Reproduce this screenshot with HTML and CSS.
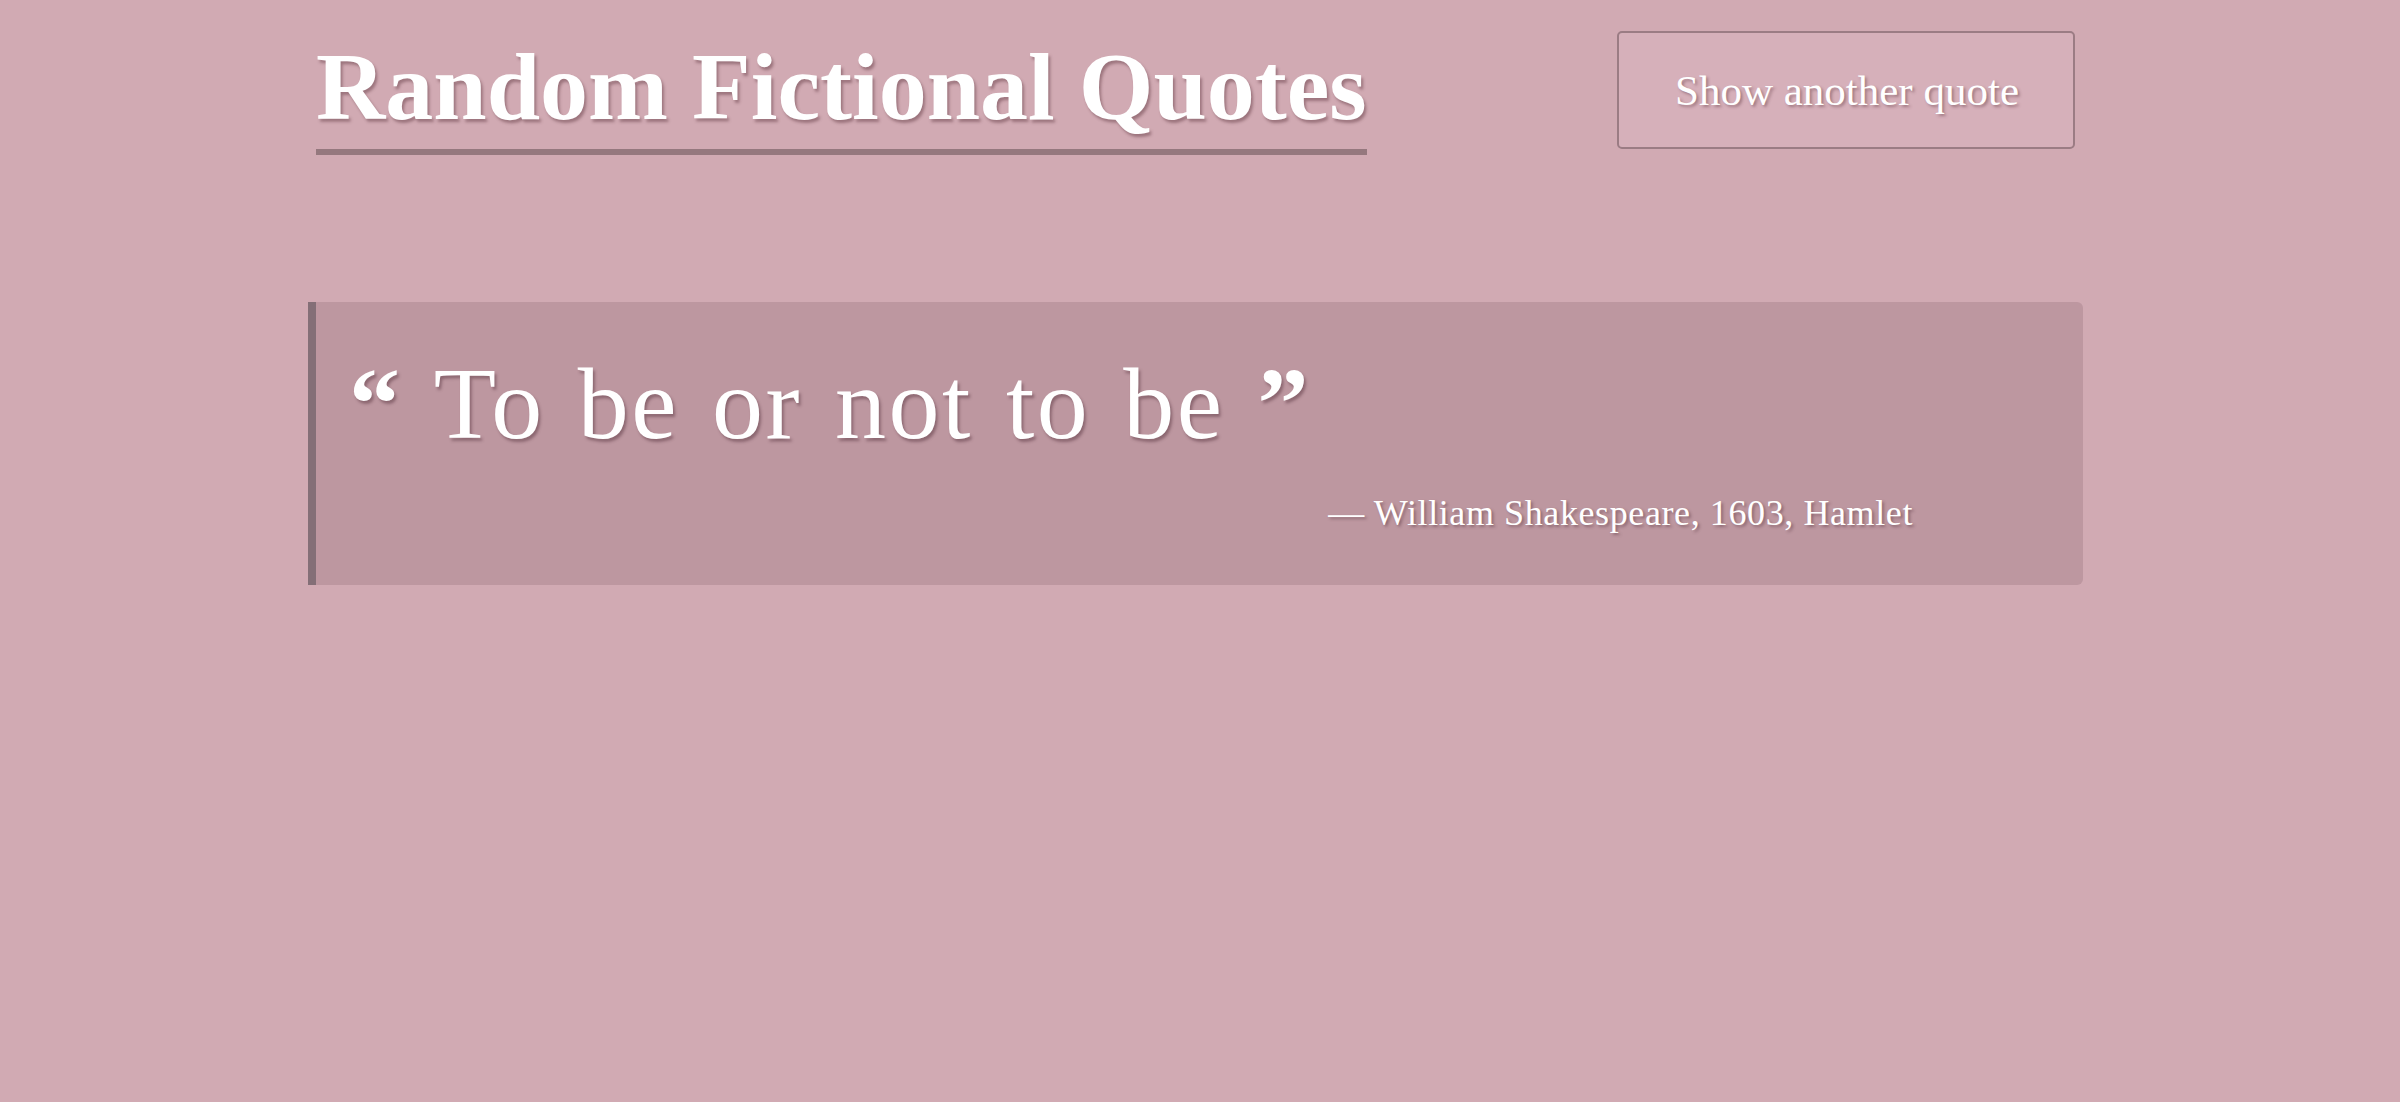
FILE: index.html
```html
<!DOCTYPE html>
<html lang="en">
<head>
<meta charset="utf-8">
<title>Random Fictional Quotes</title>
<link rel="stylesheet" href="styles.css">
</head>
<body>
<div class="page">
  <header class="header">
    <h1 class="title">Random Fictional Quotes</h1>
    <button class="btn" type="button">Show another quote</button>
  </header>
  <blockquote class="quote">
    <p class="quote-text"><span class="mark">“</span> To be or not to be <span class="mark">”</span></p>
    <p class="cite">— William Shakespeare, 1603, Hamlet</p>
  </blockquote>
</div>
</body>
</html>
```
FILE: styles.css
```css
html, body {
  margin: 0;
  padding: 0;
}
body {
  background: #d1aab3;
  font-family: "Liberation Serif", "DejaVu Serif", serif;
  color: #fff;
  min-height: 1102px;
}
.page {
  width: 1775px;
  margin-left: 308px;
}
.header {
  display: flex;
  justify-content: space-between;
  align-items: flex-start;
  padding: 31px 8px 0;
}
.title {
  margin: 0;
  font-size: 96px;
  font-weight: 700;
  line-height: 112px;
  padding-bottom: 6px;
  border-bottom: 6px solid #95787e;
  text-shadow: 2px 3px 3px rgba(90, 50, 60, 0.45);
}
.btn {
  width: 458px;
  height: 118px;
  background: #d6b0ba;
  border: 2px solid #9b7c84;
  border-radius: 5px;
  color: #fff;
  font-family: "Liberation Serif", "DejaVu Serif", serif;
  font-size: 43px;
  text-shadow: 2px 2px 3px rgba(90, 50, 60, 0.45);
  padding: 0 0 0 2px;
}
.quote {
  margin: 147px 0 0;
  background: #bd97a0;
  border-left: 8px solid #846f77;
  border-radius: 0 6px 6px 0;
  height: 283px;
  box-sizing: border-box;
  padding: 50px 170px 0 33px;
}
.quote-text {
  margin: 0;
  font-size: 102px;
  line-height: 104px;
  letter-spacing: 2.5px;
  word-spacing: 5px;
  text-shadow: 2px 3px 3px rgba(80, 45, 55, 0.45);
}
.mark {
  font-weight: 700;
}
.cite {
  margin: 36px 0 0;
  text-align: right;
  font-size: 36px;
  letter-spacing: 0.6px;
  text-shadow: 2px 2px 3px rgba(80, 45, 55, 0.45);
}
```
